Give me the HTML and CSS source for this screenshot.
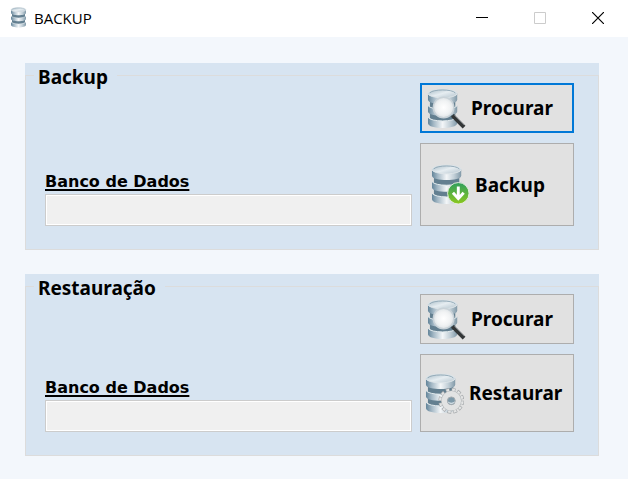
FILE: index.html
```html
<!DOCTYPE html>
<html lang="pt-BR">
<head>
<meta charset="utf-8">
<meta name="viewport" content="width=device-width, initial-scale=1">
<title>BACKUP</title>
<link rel="stylesheet" href="styles.css">
</head>
<body>
<svg class="defs" aria-hidden="true">
  <defs>
    <linearGradient id="side" x1="0" x2="1" y1="0" y2="0">
      <stop offset="0" stop-color="#64859a"/>
      <stop offset=".2" stop-color="#a5b9c6"/>
      <stop offset=".5" stop-color="#f3f6f8"/>
      <stop offset=".75" stop-color="#c3d0d8"/>
      <stop offset="1" stop-color="#8199a8"/>
    </linearGradient>
    <linearGradient id="lid" x1="0" x2="1" y1="0" y2="1">
      <stop offset="0" stop-color="#a3b8c4"/>
      <stop offset=".5" stop-color="#e6edf1"/>
      <stop offset="1" stop-color="#b3c3cd"/>
    </linearGradient>
    <linearGradient id="green" x1="0" x2="0" y1="0" y2="1">
      <stop offset="0" stop-color="#2f9e5e"/>
      <stop offset="1" stop-color="#8cc81e"/>
    </linearGradient>
    <radialGradient id="lens">
      <stop offset="0" stop-color="#ffffff"/>
      <stop offset=".65" stop-color="#f1f3f4"/>
      <stop offset="1" stop-color="#dfe4e7"/>
    </radialGradient>
    <symbol id="database" viewBox="0 0 32 42">
      <path d="M3 11v19c0 6 26 6 26 0V11z" fill="#637f90"/>
      <path d="M1 30v6c0 6.500 30 6.500 30 0v-6c-3 5-27 5-30 0z" fill="url(#side)"/>
      <path d="M1 30c3 5 27 5 30 0" fill="none" stroke="#e2eaee"/>
      <path d="M1 18v6c0 6 30 6 30 0v-6c-3 5-27 5-30 0z" fill="url(#side)"/>
      <path d="M1 18c3 5 27 5 30 0" fill="none" stroke="#e2eaee"/>
      <path d="M1 5v7c0 6 30 6 30 0V5z" fill="url(#side)"/>
      <ellipse cx="16" cy="5.500" rx="15" ry="4.500" fill="url(#lid)" stroke="#dce3e7"/>
      <path d="M3 5c3-4 23-4 26 0" fill="none" stroke="#94abb8"/>
    </symbol>
    <symbol id="search" viewBox="0 0 40 42">
      <use href="#database" width="32" height="42"/>
      <path d="M26 28l12 12" stroke="#333637" stroke-width="4"/>
      <path d="M28 28l10 10" stroke="#73787b" stroke-width="1"/>
      <circle cx="17" cy="20" r="10.500" fill="url(#lens)" stroke="#c9d2d8" stroke-width="1.500"/>
    </symbol>
    <symbol id="download" viewBox="0 0 40 42">
      <use href="#database" width="32" height="42"/>
      <circle cx="28" cy="30" r="11" fill="url(#green)" stroke="#e4eddf"/>
      <path d="M28 23v11M22.500 29.500l5.500 6 5.500-6" fill="none" stroke="#fff" stroke-width="3"/>
    </symbol>
    <symbol id="restore" viewBox="0 0 40 42">
      <use href="#database" width="32" height="42"/>
      <circle cx="27" cy="28.500" r="11" fill="none" stroke="#a2a6a9" stroke-width="4.500" stroke-dasharray="3.660 2.100"/>
      <circle cx="27" cy="28.500" r="10.800" fill="none" stroke="#e4e5e5" stroke-width="3.600" stroke-dasharray="2.600 3.055" stroke-dashoffset="-.5"/>
      <circle cx="27" cy="28.500" r="7" fill="none" stroke="#b4b8ba" stroke-width="7"/>
      <circle cx="27" cy="28.500" r="7" fill="none" stroke="#e2e3e3" stroke-width="6"/>
      <circle cx="27" cy="28.500" r="4" fill="#7d99a9" stroke="#a7adb1"/>
      <path d="M23.500 29c2 2 5 2 7 0v1c-2 2.500-5 2.500-7 0z" fill="#d2dde3"/>
    </symbol>
  </defs>
</svg>

<header class="titlebar">
  <svg class="app-icon" aria-hidden="true"><use href="#database"/></svg>
  <h1 class="title">BACKUP</h1>
  <div class="window-controls">
    <button class="control" type="button" aria-label="Minimizar">
      <svg class="glyph" viewBox="0 0 12 12"><path d="M0 5.500h12" stroke="#000"/></svg>
    </button>
    <button class="control" type="button" aria-label="Maximizar" disabled>
      <svg class="glyph" viewBox="0 0 12 12"><path d="M.5.5h11v11H.5z" fill="none" stroke="#ccc"/></svg>
    </button>
    <button class="control" type="button" aria-label="Fechar">
      <svg class="glyph" viewBox="0 0 12 12"><path d="M0 0l12 12M12 0L0 12" stroke="#000" stroke-width="1.200"/></svg>
    </button>
  </div>
</header>

<main class="content">
  <section class="panel">
    <fieldset class="group">
      <legend class="legend">Backup</legend>
      <div class="group-body">
        <div class="field">
          <label class="label" for="backup-db">Banco de Dados</label>
          <input class="input" id="backup-db" type="text" readonly>
        </div>
        <div class="actions">
          <button class="button browse focused" type="button"><svg class="icon" aria-hidden="true"><use href="#search"/></svg>Procurar</button>
          <button class="button backup" type="button"><svg class="icon" aria-hidden="true"><use href="#download"/></svg>Backup</button>
        </div>
      </div>
    </fieldset>
  </section>

  <section class="panel">
    <fieldset class="group">
      <legend class="legend">Restauração</legend>
      <div class="group-body">
        <div class="field">
          <label class="label" for="restore-db">Banco de Dados</label>
          <input class="input" id="restore-db" type="text" readonly>
        </div>
        <div class="actions">
          <button class="button browse" type="button"><svg class="icon" aria-hidden="true"><use href="#search"/></svg>Procurar</button>
          <button class="button restore" type="button"><svg class="icon" aria-hidden="true"><use href="#restore"/></svg>Restaurar</button>
        </div>
      </div>
    </fieldset>
  </section>
</main>
</body>
</html>
```
FILE: styles.css
```css
* {
  box-sizing: border-box;
}

body {
  margin: 0;
  min-height: 100vh;
  background: #f3f7fc;
  color: #000;
  font-family: "Trebuchet MS", "Noto Sans", sans-serif;
}

.defs {
  position: absolute;
  width: 0;
  height: 0;
}

.titlebar {
  display: flex;
  align-items: center;
  height: 37px;
  padding: 0 1px 2px 10px;
  background: #fff;
}

.app-icon {
  width: 17px;
  height: 21px;
}

.title {
  flex: 1;
  margin: 0 0 0 7px;
  font: 400 15px/18px "Segoe UI", "Open Sans", sans-serif;
}

.window-controls {
  display: flex;
}

.control {
  display: flex;
  align-items: center;
  justify-content: center;
  width: 58px;
  height: 35px;
  padding: 0;
  border: 0;
  background: none;
}

.glyph {
  width: 12px;
  height: 12px;
}

.content {
  display: flex;
  flex-direction: column;
  gap: 24px;
  padding: 26px 29px 23px 25px;
}

.panel {
  background: #d7e4f1;
}

.group {
  min-width: 0;
  margin: 0;
  padding: 0 24px 23px 19px;
  border: 1px solid #dcdcdc;
}

.legend {
  margin-left: -11px;
  padding: 5px 9px 0 4px;
  font-size: 19px;
  font-weight: 700;
  line-height: 19px;
}

.group-body {
  display: grid;
  grid-template-columns: 1fr 154px;
  gap: 8px;
  margin-top: -4px;
}

.field {
  display: flex;
  flex-direction: column;
  align-items: flex-start;
  justify-content: flex-end;
  gap: 2px;
}

.label {
  font: 700 16px/20px Verdana, "DejaVu Sans", sans-serif;
  text-decoration: underline;
  text-decoration-thickness: 2px;
  text-underline-offset: 2px;
}

.input {
  width: 100%;
  height: 32px;
  padding: 0 6px;
  border: 1px solid #ccc;
  outline: 0;
  background: #f0f0f0;
  box-shadow: inset 0 0 0 1px #fff;
  font: inherit;
}

.actions {
  display: flex;
  flex-direction: column;
  gap: 10px;
}

.button {
  display: flex;
  align-items: center;
  padding: 0 0 0 6px;
  border: 1px solid #adadad;
  background: #e1e1e1;
  color: #000;
  font: inherit;
  font-size: 19px;
  font-weight: 700;
  line-height: 24px;
}

.focused {
  padding-left: 5px;
  border: 2px solid #0078d7;
}

.browse {
  gap: 5px;
  height: 50px;
}

.backup {
  gap: 5px;
  height: 83px;
  padding-left: 10px;
}

.restore {
  gap: 5px;
  height: 78px;
  padding-left: 4px;
}

.icon {
  flex: none;
  width: 39px;
  height: 41px;
}
```
